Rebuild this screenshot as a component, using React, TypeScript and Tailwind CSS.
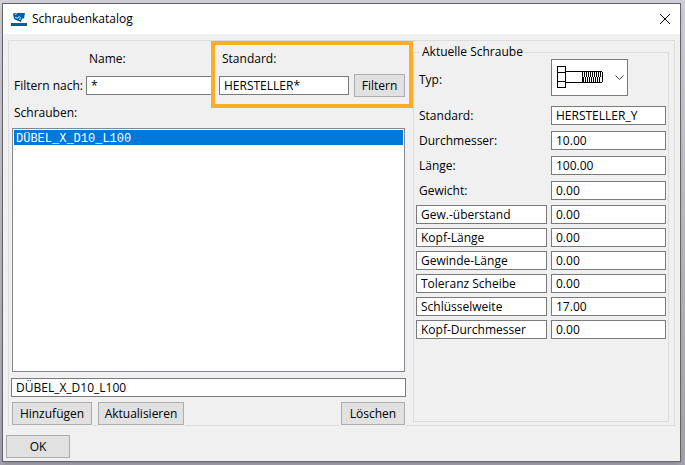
import { useState } from "react";

const dimensions = [
  { id: "standard", label: "Standard:", value: "HERSTELLER_Y" },
  { id: "durchmesser", label: "Durchmesser:", value: "10.00" },
  { id: "laenge", label: "Länge:", value: "100.00" },
  { id: "gewicht", label: "Gewicht:", value: "0.00" },
];

const attributes = [
  { name: "Gew.-überstand", value: "0.00" },
  { name: "Kopf-Länge", value: "0.00" },
  { name: "Gewinde-Länge", value: "0.00" },
  { name: "Toleranz Scheibe", value: "0.00" },
  { name: "Schlüsselweite", value: "17.00" },
  { name: "Kopf-Durchmesser", value: "0.00" },
];

const inputClass =
  "block h-[19px] w-full min-w-0 border border-[#7a7a7a] bg-white px-1 outline-none focus:border-[#0078d7]";
const buttonClass =
  "h-[23px] border border-[#adadad] bg-[#e1e1e1] text-center ring-1 ring-[#f0f0f0] hover:bg-[#e5f1fb]";

function AppIcon() {
  return (
    <svg width="16" height="14" viewBox="0 0 16 14" aria-hidden="true">
      <path d="M0 11h16v3H0z" fill="#005f9e" />
      <path d="M2 1.5L5 1h9l-1 5.5h-2L10 10 6 8.5 3 7z" fill="#005f9e" />
      <path d="M5.5 1L4.5 3M4 5.5l3 .5 1.5-2M9.5 5l-1 3" fill="none" stroke="#fff" strokeWidth="0.8" />
    </svg>
  );
}

function BoltIcon() {
  return (
    <svg
      width="48"
      height="24"
      viewBox="0 0 48 24"
      fill="none"
      stroke="#000"
      shapeRendering="crispEdges"
      className="pointer-events-none absolute top-[6px] left-[5px]"
    >
      <path d="M1.5 1.5h8v21h-8zM1.5 7.5h8M1.5 16.5h8" />
      <path d="M9.5 6.5h36M9.5 17.5h36M26.5 6v12M46.5 7v10" />
      {/* thread */}
      <path d="M28.5 7v5M30.5 7v5M32.5 7v5M34.5 7v5M36.5 7v5M38.5 7v5M40.5 7v5M42.5 7v5M44.5 7v5" />
      <path d="M27.5 12v5M29.5 12v5M31.5 12v5M33.5 12v5M35.5 12v5M37.5 12v5M39.5 12v5M41.5 12v5M43.5 12v5" />
    </svg>
  );
}

function TypeSelect() {
  return (
    <div className="relative h-[37px] w-[77px]">
      <select id="typ" className="h-full w-full appearance-none border border-[#7a7a7a] bg-white outline-none">
        <option value="bolt"></option>
      </select>
      <BoltIcon />
      <svg
        width="9"
        height="6"
        viewBox="0 0 9 6"
        fill="none"
        stroke="#444"
        className="pointer-events-none absolute top-4 right-1"
      >
        <path d="M0.5 0.5l4 4 4-4" />
      </svg>
    </div>
  );
}

function App() {
  const [screws] = useState(["DÜBEL_X_D10_L100"]);
  const [selected, setSelected] = useState("DÜBEL_X_D10_L100");

  return (
    <div className="flex min-h-screen bg-linear-to-b from-[#cfcdd8] to-[#a5a2b0] pt-[3px] pr-1 pb-[3px] pl-[2px] font-['Open_Sans',sans-serif] text-[12px] leading-4 text-black">
      <div className="flex min-w-0 flex-1 flex-col border border-[#646466] bg-[#f0f0f0] shadow-md">
        <header className="flex h-[30px] items-center bg-white pr-[9px] pl-2">
          <AppIcon />
          <h1 className="ml-[5px] flex-1">Schraubenkatalog</h1>
          <button type="button" aria-label="Schließen">
            <svg width="12" height="12" viewBox="0 0 12 12" fill="none" stroke="#000">
              <path d="M1 1l10 10M11 1L1 11" />
            </svg>
          </button>
        </header>

        <main className="flex flex-1 flex-col pt-[6px] pb-[3px]">
          <div className="mx-[5px] flex flex-1 border border-[#dcdcdc]">
            <section className="relative flex min-w-0 flex-1 flex-col pt-[10px] pr-2 pl-[3px]">
              <div className="grid grid-cols-[74px_1fr_135px_51px] items-center gap-y-[7px]">
                <label htmlFor="name" className="col-start-2 pl-[3px]">
                  Name:
                </label>
                <label htmlFor="filter-standard" className="pl-[3px]">
                  Standard:
                </label>
                <span className="col-start-1 pl-[2px]">Filtern nach:</span>
                <div className="pr-[6px]">
                  <input id="name" className={inputClass} defaultValue="*" />
                </div>
                <div className="pr-[5px]">
                  <input id="filter-standard" className={inputClass} defaultValue="HERSTELLER*" />
                </div>
                <button type="button" className={buttonClass}>
                  Filtern
                </button>
              </div>

              <h2 className="mt-2 pl-[2px]">Schrauben:</h2>
              <ul className="mt-[7px] flex-1 border border-[#828790] bg-white p-px">
                {screws.map((screw) => (
                  <li key={screw}>
                    <button
                      type="button"
                      onClick={() => setSelected(screw)}
                      className={`block h-[15px] w-full pl-[2px] text-left font-['Liberation_Mono',monospace] leading-[18px] ${
                        selected === screw ? "bg-[#0078d7] text-white" : ""
                      }`}
                    >
                      {screw}
                    </button>
                  </li>
                ))}
              </ul>

              <div className="-mx-px mt-[6px]">
                <input
                  aria-label="Schraube"
                  className={inputClass}
                  value={selected}
                  onChange={(e) => setSelected(e.target.value)}
                />
              </div>
              <div className="mt-[5px] flex">
                <button type="button" className={`w-20 ${buttonClass}`}>
                  Hinzufügen
                </button>
                <button type="button" className={`ml-[6px] w-[86px] ${buttonClass}`}>
                  Aktualisieren
                </button>
                <button type="button" className={`ml-auto w-16 ${buttonClass}`}>
                  Löschen
                </button>
              </div>

              {/* highlight around the standard filter */}
              <div className="pointer-events-none absolute top-0 right-0 h-[67px] w-[202px] border-4 border-[#fbad26]" />
            </section>

            <fieldset className="mt-1 mr-[5px] mb-[3px] w-64 border border-[#dcdcdc] px-[2px]">
              <legend className="ml-1 px-[2px] leading-[14px]">Aktuelle Schraube</legend>
              <div className="flex">
                <label htmlFor="typ" className="flex-1 self-center pt-1 pl-[3px]">
                  Typ:
                </label>
                <div className="w-[115px]">
                  <TypeSelect />
                </div>
              </div>
              <div className="mt-[10px] flex flex-col gap-[6px]">
                {dimensions.map(({ id, label, value }) => (
                  <div key={id} className="flex items-center">
                    <label htmlFor={id} className="flex-1 pl-[3px]">
                      {label}
                    </label>
                    <div className="w-[115px]">
                      <input id={id} className={inputClass} defaultValue={value} />
                    </div>
                  </div>
                ))}
              </div>
              <div className="mt-[5px] flex flex-col gap-1">
                {attributes.map(({ name, value }) => (
                  <div key={name} className="grid grid-cols-[1fr_115px] gap-1">
                    <input aria-label="Attribut" className={inputClass} defaultValue={name} />
                    <input aria-label={name} className={inputClass} defaultValue={value} />
                  </div>
                ))}
              </div>
            </fieldset>
          </div>

          <div className="mt-[9px] pl-[3px]">
            <button type="button" className={`w-16 ${buttonClass}`}>
              OK
            </button>
          </div>
        </main>
      </div>
    </div>
  );
}

export default App;
